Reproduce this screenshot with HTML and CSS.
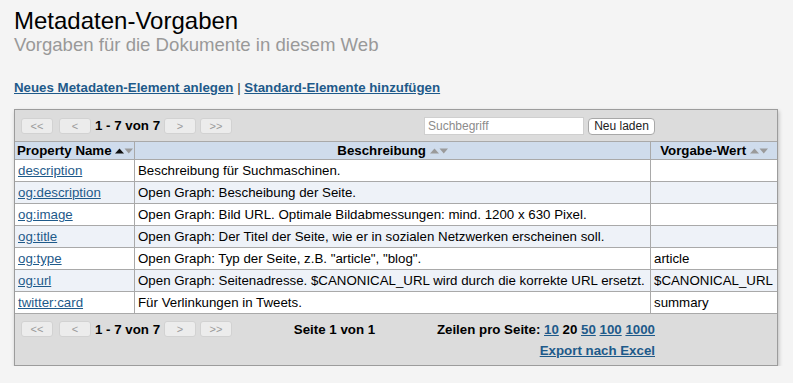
FILE: index.html
```html
<!DOCTYPE html>
<html lang="de">
<head>
<meta charset="utf-8">
<title>Metadaten-Vorgaben</title>
<link rel="stylesheet" href="styles.css">
</head>
<body>
<header class="page-head">
  <h1 class="title">Metadaten-Vorgaben</h1>
  <p class="subtitle">Vorgaben für die Dokumente in diesem Web</p>
</header>
<nav class="actions">
  <a href="#" class="action-link">Neues Metadaten-Element anlegen</a> <span class="sep">|</span> <a href="#" class="action-link">Standard-Elemente hinzufügen</a>
</nav>
<section class="panel">
  <div class="bar bar-top">
    <div class="pager">
      <button class="pbtn">&lt;&lt;</button>
      <button class="pbtn">&lt;</button>
      <span class="range">1 - 7 von 7</span>
      <button class="pbtn">&gt;</button>
      <button class="pbtn">&gt;&gt;</button>
    </div>
    <div class="search">
      <input class="search-input" type="text" placeholder="Suchbegriff">
      <button class="reload">Neu laden</button>
    </div>
  </div>
  <table class="grid">
    <colgroup><col class="c1"><col class="c2"><col class="c3"></colgroup>
    <thead>
      <tr>
        <th>Property Name <svg class="sort" width="18" height="6" viewBox="0 0 18 6"><polygon points="0,5.5 4.5,0.5 9,5.5" fill="#111"/><polygon points="9.5,0.5 18,0.5 13.75,5.5" fill="#9a9a9a"/></svg></th>
        <th>Beschreibung <svg class="sort" width="18" height="6" viewBox="0 0 18 6"><polygon points="0,5.5 4.5,0.5 9,5.5" fill="#9a9a9a"/><polygon points="9.5,0.5 18,0.5 13.75,5.5" fill="#9a9a9a"/></svg></th>
        <th>Vorgabe-Wert <svg class="sort" width="18" height="6" viewBox="0 0 18 6"><polygon points="0,5.5 4.5,0.5 9,5.5" fill="#9a9a9a"/><polygon points="9.5,0.5 18,0.5 13.75,5.5" fill="#9a9a9a"/></svg></th>
      </tr>
    </thead>
    <tbody>
      <tr><td><a href="#">description</a></td><td>Beschreibung für Suchmaschinen.</td><td></td></tr>
      <tr><td><a href="#">og:description</a></td><td>Open Graph: Bescheibung der Seite.</td><td></td></tr>
      <tr><td><a href="#">og:image</a></td><td>Open Graph: Bild URL. Optimale Bildabmessungen: mind. 1200 x 630 Pixel.</td><td></td></tr>
      <tr><td><a href="#">og:title</a></td><td>Open Graph: Der Titel der Seite, wie er in sozialen Netzwerken erscheinen soll.</td><td></td></tr>
      <tr><td><a href="#">og:type</a></td><td>Open Graph: Typ der Seite, z.B. "article", "blog".</td><td>article</td></tr>
      <tr><td><a href="#">og:url</a></td><td>Open Graph: Seitenadresse. $CANONICAL_URL wird durch die korrekte URL ersetzt.</td><td>$CANONICAL_URL</td></tr>
      <tr><td><a href="#">twitter:card</a></td><td>Für Verlinkungen in Tweets.</td><td>summary</td></tr>
    </tbody>
  </table>
  <div class="foot">
    <div class="bar">
      <div class="pager">
        <button class="pbtn">&lt;&lt;</button>
        <button class="pbtn">&lt;</button>
        <span class="range">1 - 7 von 7</span>
        <button class="pbtn">&gt;</button>
        <button class="pbtn">&gt;&gt;</button>
      </div>
      <span class="pageinfo">Seite 1 von 1</span>
      <span class="rows">Zeilen pro Seite: <a href="#">10</a> 20 <a href="#">50</a> <a href="#">100</a> <a href="#">1000</a></span>
    </div>
    <div class="export-row"><a href="#" class="export">Export nach Excel</a></div>
  </div>
</section>
</body>
</html>
```
FILE: styles.css
```css
html, body {
  margin: 0;
  padding: 0;
}
body {
  background: #f4f4f4;
  font-family: "Liberation Sans", Arial, Helvetica, sans-serif;
  color: #000;
  padding: 8px 14px 0 14px;
}
.page-head {
  margin: 0;
}
.title {
  margin: 0;
  font-size: 24px;
  line-height: 26px;
  font-weight: normal;
  color: #000;
}
.subtitle {
  margin: 0;
  font-size: 18.6px;
  line-height: 21px;
  color: #999;
}
.actions {
  margin-top: 25px;
  font-size: 13.3px;
  line-height: 15px;
  font-weight: bold;
}
.action-link {
  color: #1e5a8a;
}
.sep {
  font-weight: normal;
  color: #333;
}
.panel {
  margin-top: 14px;
  width: 764px;
  box-sizing: border-box;
  background: #dcdcdc;
  border: 1px solid #9c9c9c;
  box-shadow: 1px 2px 4px rgba(0, 0, 0, 0.22);
}
.bar {
  width: 634px;
  margin-left: 6px;
  display: flex;
  justify-content: space-between;
  align-items: center;
  font-size: 13.3px;
  line-height: 15px;
  font-weight: bold;
}
.bar-top {
  height: 31px;
}
.pager {
  display: flex;
  align-items: center;
  gap: 4px;
}
.pager .pbtn:first-child {
  margin-right: 2px;
}
.pbtn {
  width: 32px;
  height: 16px;
  box-sizing: border-box;
  padding: 0;
  margin: 0;
  border: 1px solid #d2d2d2;
  border-radius: 3px;
  background: #ececec;
  color: #9a9a9a;
  font-family: "Liberation Sans", Arial, sans-serif;
  font-size: 11px;
  line-height: 14px;
}
.range {
  font-weight: bold;
}
.search {
  display: flex;
  align-items: center;
  gap: 4px;
}
.search-input {
  width: 160px;
  height: 18px;
  box-sizing: border-box;
  border: 1px solid #cfcfcf;
  background: #fff;
  padding: 0 3px;
  margin: 0;
  font-family: "Liberation Sans", Arial, sans-serif;
  font-size: 12px;
}
.search-input::placeholder {
  color: #8c8c8c;
}
.reload {
  width: 67px;
  height: 17px;
  box-sizing: border-box;
  margin: 1px 0 0 0;
  padding: 0;
  border: 1px solid #a8a8a8;
  border-radius: 4px;
  background: #fff;
  color: #222;
  font-family: "Liberation Sans", Arial, sans-serif;
  font-size: 12px;
  line-height: 15px;
}
.grid {
  width: 762px;
  table-layout: fixed;
  border-collapse: separate;
  border-spacing: 0;
  font-size: 13.3px;
  line-height: 15px;
}
.c1 { width: 120px; }
.c2 { width: 516px; }
.c3 { width: 126px; }
.grid th, .grid td {
  border-right: 1px solid #a9a9a9;
  border-bottom: 1px solid #a9a9a9;
  padding: 3px 3px;
  text-align: left;
  white-space: nowrap;
  overflow: hidden;
}
.grid th:last-child, .grid td:last-child {
  border-right: none;
}
.grid th {
  background: #cfdcec;
  border-top: 1px solid #a9a9a9;
  padding: 1px 2px;
  text-align: center;
  font-weight: bold;
}
.grid th:first-child {
  text-align: left;
}
.grid td {
  background: #fff;
}
.grid tbody tr:nth-child(even) td {
  background: #eef2f8;
}
.grid td a {
  color: #1e5a8a;
}
.sort {
  vertical-align: 1px;
  margin-left: 0;
}
.foot {
  padding: 7px 0 7px 0;
  display: flex;
  flex-direction: column;
  gap: 6px;
}
.foot .bar {
  height: 16px;
}
.pageinfo {
  font-weight: bold;
}
.rows a, .export {
  color: #1e5a8a;
}
.export-row {
  width: 634px;
  margin-left: 6px;
  display: flex;
  justify-content: flex-end;
  font-size: 13.3px;
  line-height: 15px;
  font-weight: bold;
}
```
